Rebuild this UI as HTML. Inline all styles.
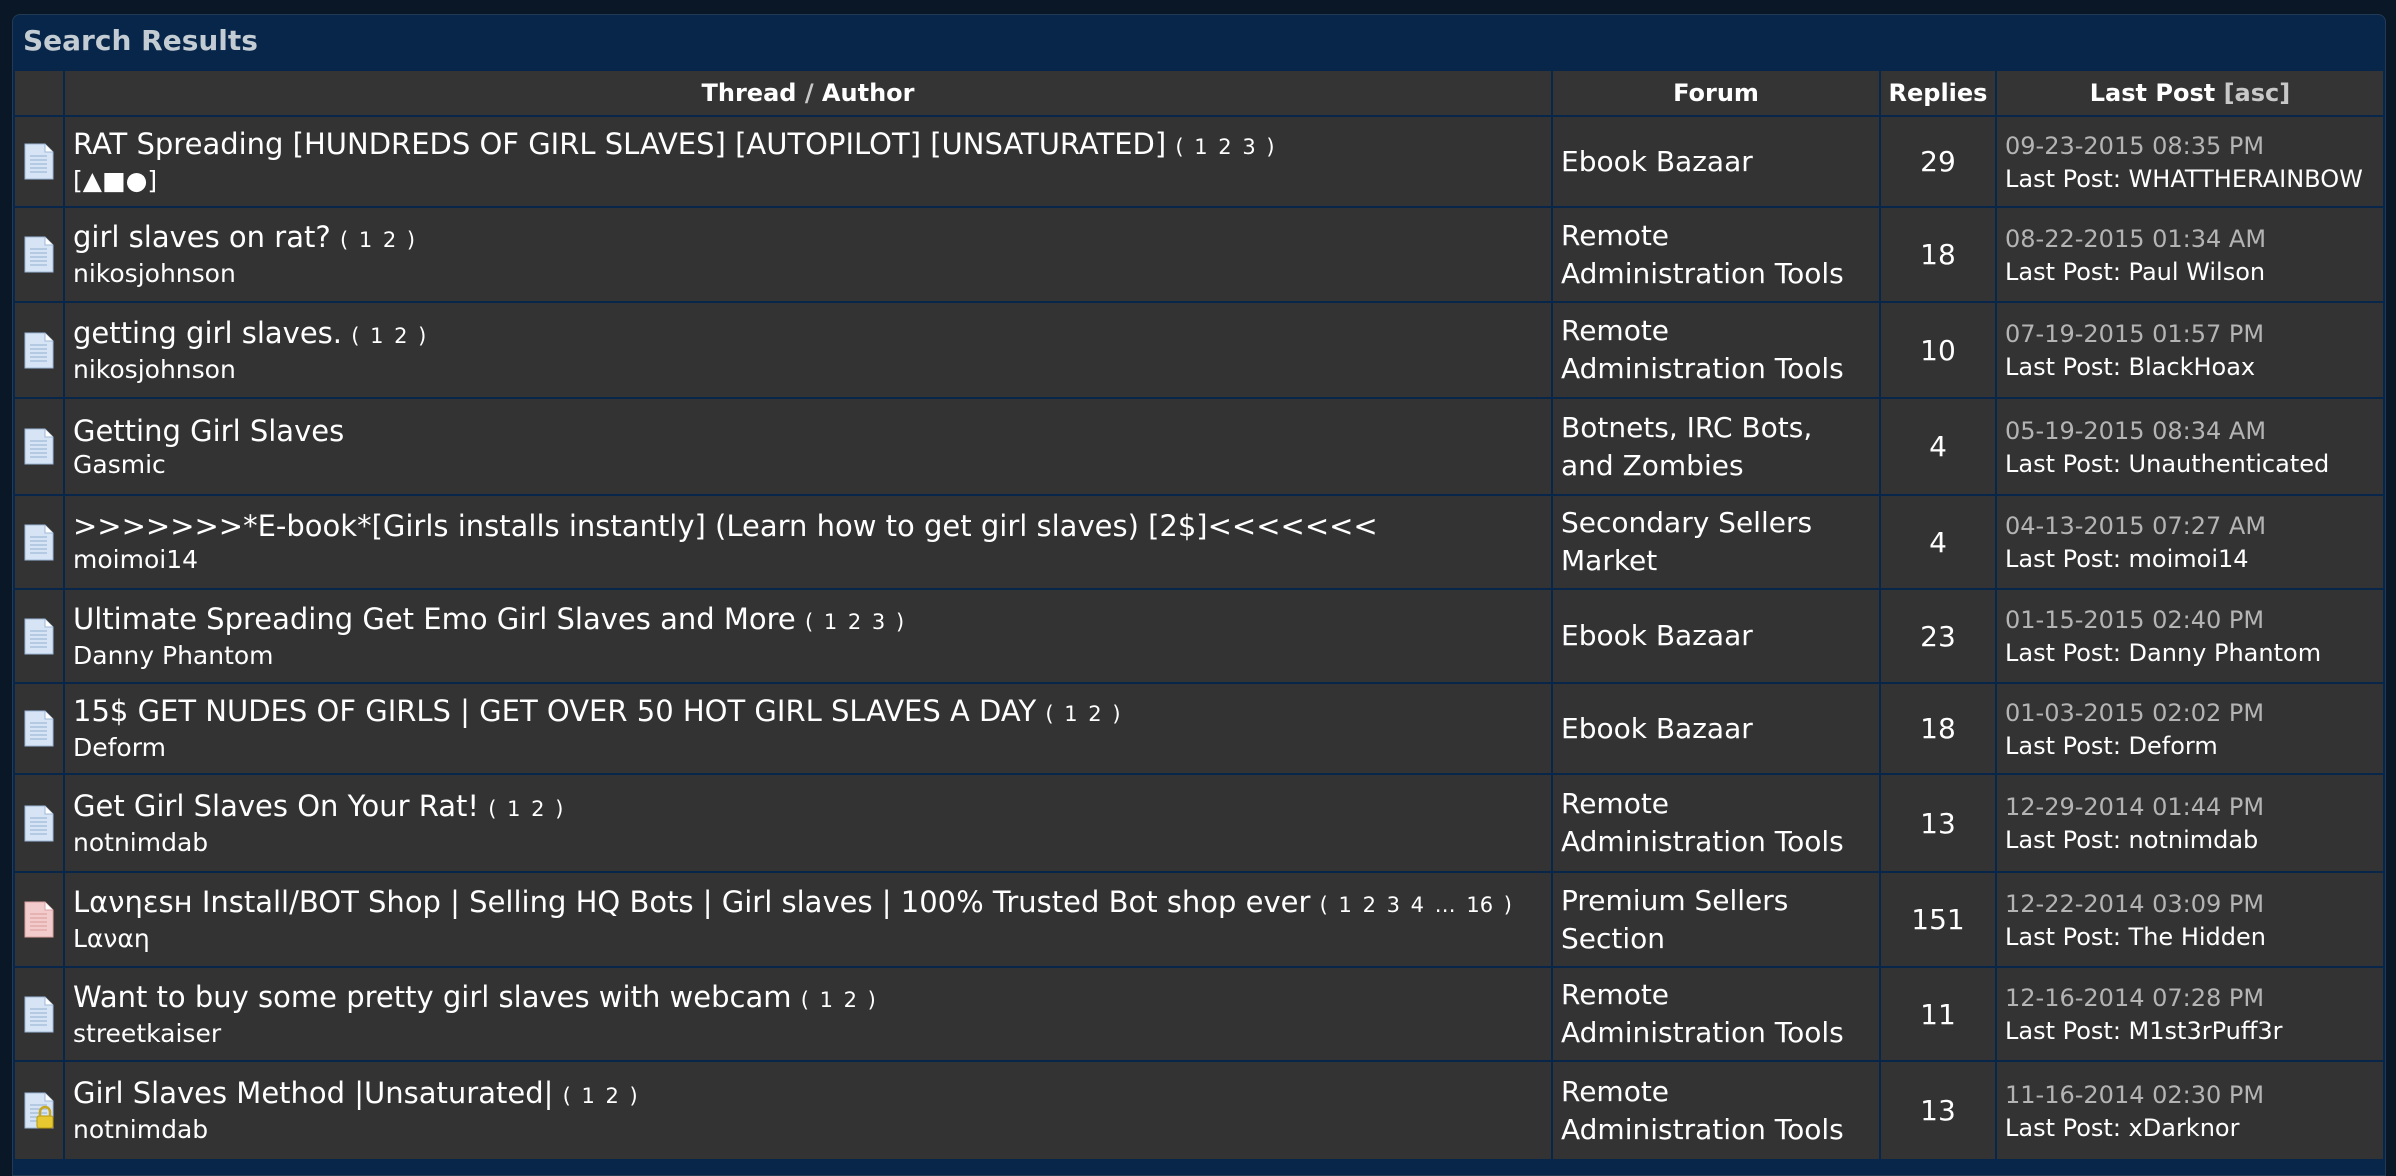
<!DOCTYPE html>
<html><head><meta charset="utf-8"><style>
html,body{margin:0;padding:0;width:2396px;height:1162px;overflow:hidden;background:#0a1726;font-family:"DejaVu Sans","Liberation Sans",sans-serif;}
.wrap{position:absolute;left:12px;top:14px;width:2372px;height:1160px;background:#07264a;border-radius:8px 8px 0 0;border:1px solid #233a55;}
.title{position:absolute;left:10px;top:9px;font-weight:bold;font-size:28px;color:#c3cbd3;}
table{position:absolute;left:0px;top:54px;width:2372px;table-layout:fixed;border-collapse:separate;border-spacing:2px;}
th{background:#343434;color:#fff;font-size:24px;font-weight:bold;height:44px;padding:0;}
td{background:#333;color:#fff;padding:0 0 0 8px;vertical-align:middle;}
td.ic{padding:0;text-align:center;}
td.ic svg{display:block;margin:0 auto;}
.t{font-size:29px;line-height:36px;white-space:nowrap;}
.p{font-size:21px;word-spacing:4px;}
.a{font-size:25px;line-height:32px;}
.f{font-size:28px;line-height:38px;}
.r{text-align:center;font-size:28px;padding:0;}
.d{font-size:24px;color:#b4b4b4;line-height:34px;}
.lp{font-size:24px;line-height:32px;}
.g{color:#c8c8c8;}
</style></head><body>
<svg width="0" height="0" style="position:absolute">
<defs>
<g id="doc"><path d="M1 1h20l8 8v27H1z" fill="#d6e4f5" stroke="#9db7d8"/><path d="M21 1v8h8" fill="#fff" stroke="#9db7d8"/><g stroke="#a9c0dc" stroke-width="1.5"><path d="M6 13h17M6 17h17M6 21h17M6 25h17M6 29h17"/></g></g>
<g id="docr"><path d="M1 1h20l8 8v27H1z" fill="#f2cccc" stroke="#dca0a0"/><path d="M21 1v8h8" fill="#fff" stroke="#dca0a0"/><g stroke="#e2aaaa" stroke-width="1.5"><path d="M6 13h17M6 17h17M6 21h17M6 25h17M6 29h17"/></g></g>
</defs></svg>
<div class="wrap">
<div class="title">Search Results</div>
<table>
<colgroup><col style="width:48px"><col style="width:1486px"><col style="width:326px"><col style="width:114px"><col></colgroup>
<tr><th></th><th>Thread <span class="g">/</span> Author</th><th>Forum</th><th>Replies</th><th>Last Post <span class="g">[asc]</span></th></tr>

<tr style="height:89px"><td class="ic"><svg width="30" height="37"><use href="#doc"/></svg></td><td><div class="t">RAT Spreading [HUNDREDS OF GIRL SLAVES] [AUTOPILOT] [UNSATURATED] <span class="p">( 1 2 3 )</span></div><div class="a">[▲■●]</div></td><td><div class="f">Ebook Bazaar</div></td><td class="r">29</td><td><div class="d">09-23-2015 08:35 PM</div><div class="lp">Last Post: WHATTHERAINBOW</div></td></tr>

<tr style="height:93px"><td class="ic"><svg width="30" height="37"><use href="#doc"/></svg></td><td><div class="t">girl slaves on rat? <span class="p">( 1 2 )</span></div><div class="a">nikosjohnson</div></td><td><div class="f">Remote<br>Administration Tools</div></td><td class="r">18</td><td><div class="d">08-22-2015 01:34 AM</div><div class="lp">Last Post: Paul Wilson</div></td></tr>

<tr style="height:94px"><td class="ic"><svg width="30" height="37"><use href="#doc"/></svg></td><td><div class="t">getting girl slaves. <span class="p">( 1 2 )</span></div><div class="a">nikosjohnson</div></td><td><div class="f">Remote<br>Administration Tools</div></td><td class="r">10</td><td><div class="d">07-19-2015 01:57 PM</div><div class="lp">Last Post: BlackHoax</div></td></tr>

<tr style="height:95px"><td class="ic"><svg width="30" height="37"><use href="#doc"/></svg></td><td><div class="t">Getting Girl Slaves</div><div class="a">Gasmic</div></td><td><div class="f">Botnets, IRC Bots,<br>and Zombies</div></td><td class="r">4</td><td><div class="d">05-19-2015 08:34 AM</div><div class="lp">Last Post: Unauthenticated</div></td></tr>

<tr style="height:92px"><td class="ic"><svg width="30" height="37"><use href="#doc"/></svg></td><td><div class="t">&gt;&gt;&gt;&gt;&gt;&gt;&gt;*E-book*[Girls installs instantly] (Learn how to get girl slaves) [2$]&lt;&lt;&lt;&lt;&lt;&lt;&lt;</div><div class="a">moimoi14</div></td><td><div class="f">Secondary Sellers<br>Market</div></td><td class="r">4</td><td><div class="d">04-13-2015 07:27 AM</div><div class="lp">Last Post: moimoi14</div></td></tr>

<tr style="height:92px"><td class="ic"><svg width="30" height="37"><use href="#doc"/></svg></td><td><div class="t">Ultimate Spreading Get Emo Girl Slaves and More <span class="p">( 1 2 3 )</span></div><div class="a">Danny Phantom</div></td><td><div class="f">Ebook Bazaar</div></td><td class="r">23</td><td><div class="d">01-15-2015 02:40 PM</div><div class="lp">Last Post: Danny Phantom</div></td></tr>

<tr style="height:89px"><td class="ic"><svg width="30" height="37"><use href="#doc"/></svg></td><td><div class="t">15$ GET NUDES OF GIRLS | GET OVER 50 HOT GIRL SLAVES A DAY <span class="p">( 1 2 )</span></div><div class="a">Deform</div></td><td><div class="f">Ebook Bazaar</div></td><td class="r">18</td><td><div class="d">01-03-2015 02:02 PM</div><div class="lp">Last Post: Deform</div></td></tr>

<tr style="height:96px"><td class="ic"><svg width="30" height="37"><use href="#doc"/></svg></td><td><div class="t">Get Girl Slaves On Your Rat! <span class="p">( 1 2 )</span></div><div class="a">notnimdab</div></td><td><div class="f">Remote<br>Administration Tools</div></td><td class="r">13</td><td><div class="d">12-29-2014 01:44 PM</div><div class="lp">Last Post: notnimdab</div></td></tr>

<tr style="height:93px"><td class="ic"><svg width="30" height="37"><use href="#docr"/></svg></td><td><div class="t">Lανηεѕн Install/BOT Shop | Selling HQ Bots | Girl slaves | 100% Trusted Bot shop ever <span class="p">( 1 2 3 4 … 16 )</span></div><div class="a">Lαναη</div></td><td><div class="f">Premium Sellers<br>Section</div></td><td class="r">151</td><td><div class="d">12-22-2014 03:09 PM</div><div class="lp">Last Post: The Hidden</div></td></tr>

<tr style="height:92px"><td class="ic"><svg width="30" height="37"><use href="#doc"/></svg></td><td><div class="t">Want to buy some pretty girl slaves with webcam <span class="p">( 1 2 )</span></div><div class="a">streetkaiser</div></td><td><div class="f">Remote<br>Administration Tools</div></td><td class="r">11</td><td><div class="d">12-16-2014 07:28 PM</div><div class="lp">Last Post: M1st3rPuff3r</div></td></tr>

<tr style="height:97px"><td class="ic"><svg width="30" height="37"><use href="#doc"/><rect x="13" y="24" width="16" height="12" rx="2" fill="#e8c830" stroke="#b89a10"/><path d="M16 24v-4a5 5 0 0 1 10 0v4" fill="none" stroke="#c8a820" stroke-width="2.5"/></svg></td><td><div class="t">Girl Slaves Method |Unsaturated| <span class="p">( 1 2 )</span></div><div class="a">notnimdab</div></td><td><div class="f">Remote<br>Administration Tools</div></td><td class="r">13</td><td><div class="d">11-16-2014 02:30 PM</div><div class="lp">Last Post: xDarknor</div></td></tr>
</table>
</div>
</body></html>
